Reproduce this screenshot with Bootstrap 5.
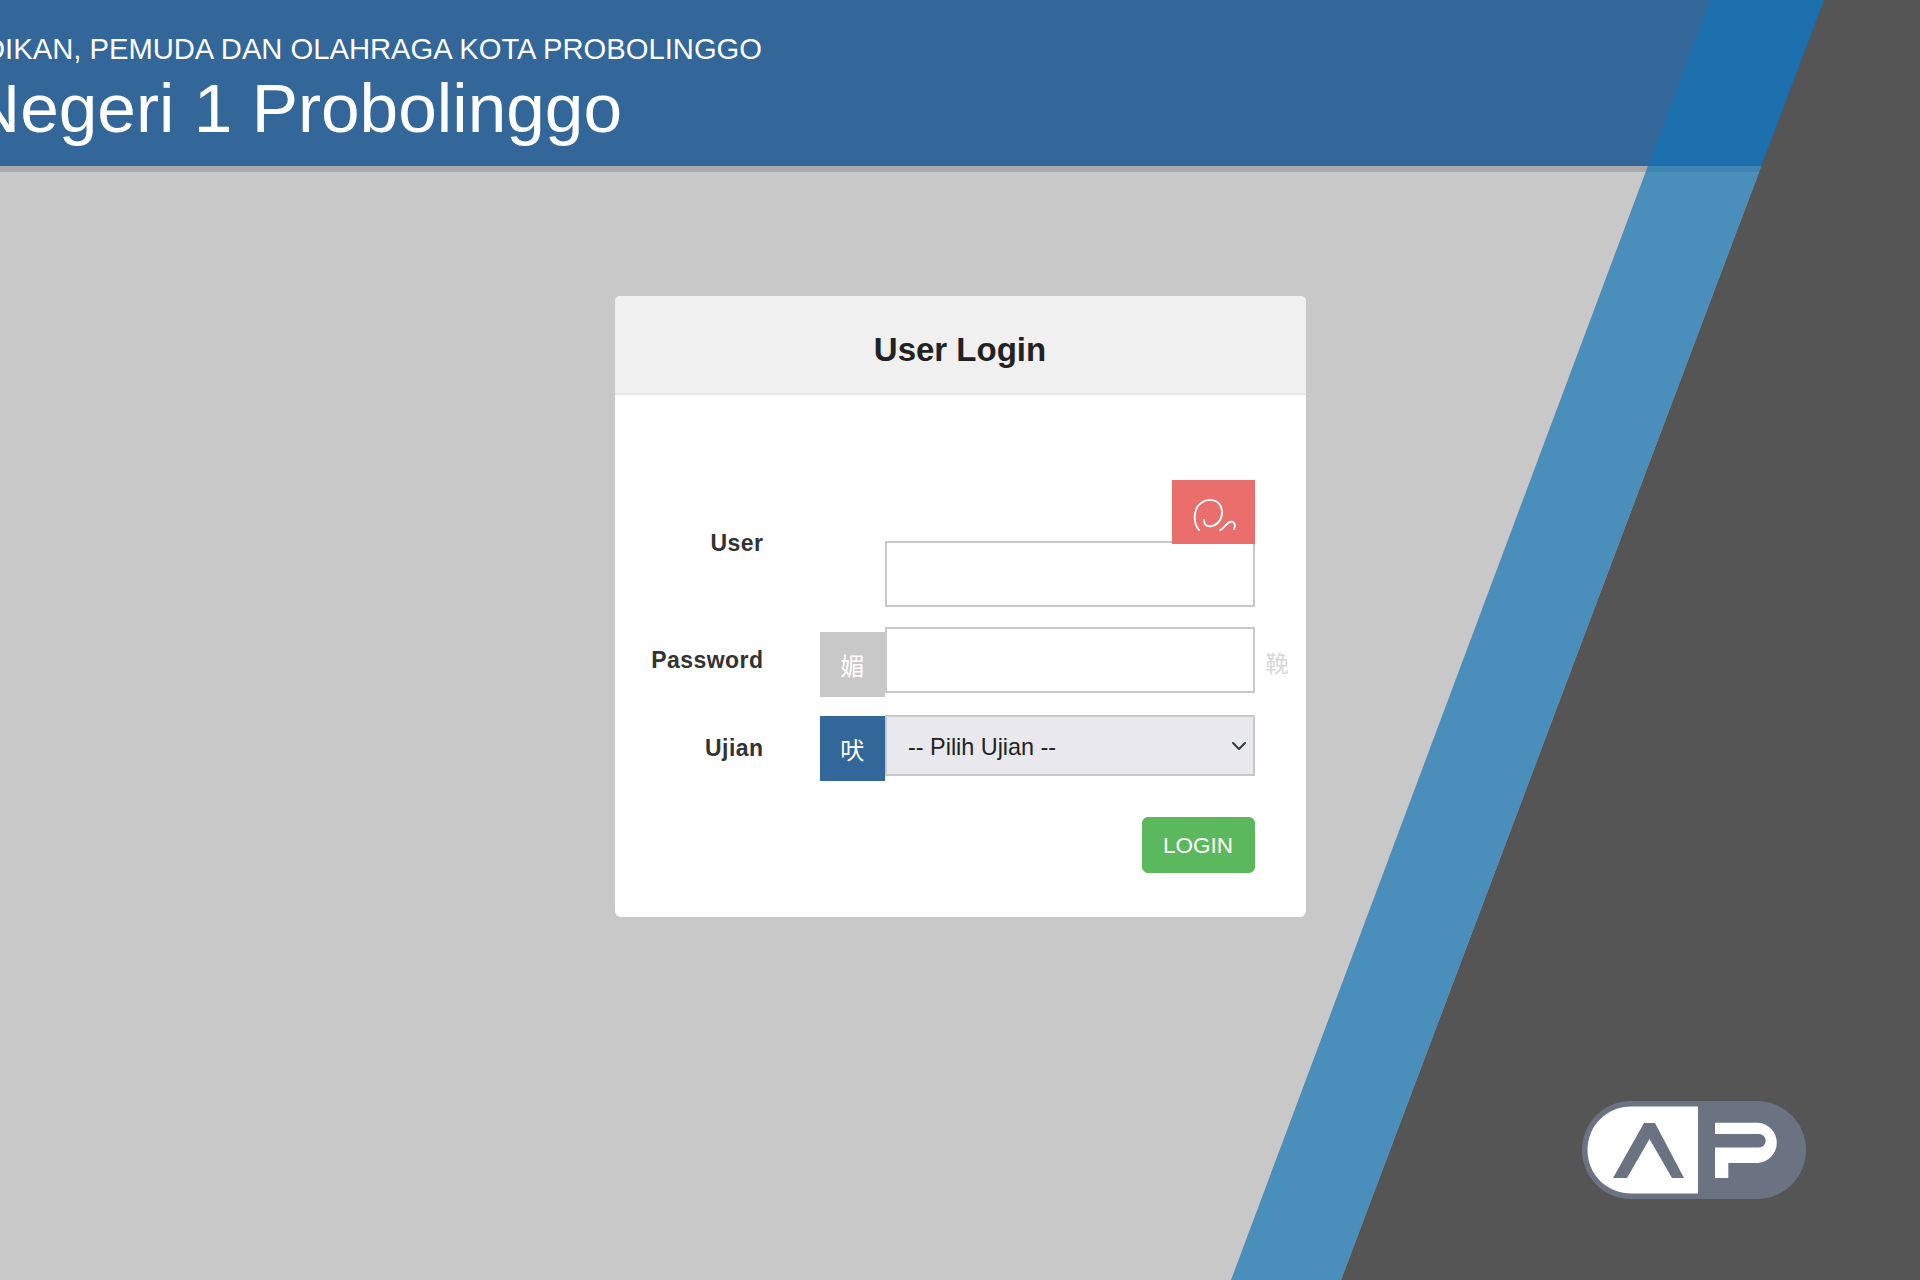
<!DOCTYPE html>
<html lang="id">
<head>
    <meta charset="UTF-8">
    <meta name="viewport" content="width=device-width, initial-scale=1.0">
    <title>User Login</title>
    <link rel="stylesheet" href="https://cdn.jsdelivr.net/npm/bootstrap@5.3.0/dist/css/bootstrap.min.css">
    <style>
        body { background: #c8c8c8; font-family: "Liberation Sans", Arial, sans-serif; color: #333; min-height: 1280px; overflow: hidden; }
        .top-bar { height: 172px; background: #336699; border-bottom: 6px solid #aaa; }
        .top-text { width: 762px; padding-top: 30px; }
        .top-sub { font-size: 29.2px; line-height: 38px; }
        .top-title { font-size: 69.4px; line-height: 80px; margin-right: 140px; }
        .bg-shapes { left: 0; top: 0; pointer-events: none; }
        .ap-logo { left: 1582px; top: 1101px; }
        .login-box { width: 691px; height: 621px; margin: 124px auto 0; border: 0; border-radius: 6px; }
        .login-box .card-header { height: 99px; padding-top: 19px; background: #f0f0f0; border-bottom: 2px solid #e6e6e6; font-size: 33px; font-weight: 700; color: #222; }
        .login-box .card-body { padding: 146px 0 42px; }
        .lbl-col { width: 149px; margin-right: 56px; font-size: 23px; font-weight: 700; letter-spacing: .45px; }
        .user-lbl { margin-top: -15px; }
        .add-box { width: 65.5px; height: 65px; background: #c8c8c8; color: #fff; font-size: 24px; font-family: "Noto Sans CJK SC", sans-serif; }
        .add-box.blue { background: #336699; }
        .fld-col { width: 369.5px; }
        .login-box .fld { height: 66px; border: 2px solid #c8c8c8; border-radius: 0; }
        .login-box .sel { height: 61px; border: 2px solid #c8c8c8; border-radius: 0; background-color: #e8e8ed; font-size: 23.4px; padding: 7px 36px 3px 21px; color: #222; background-position: right 4px center; background-size: 20px 16px; }
        .tail-col { width: 51px; padding-left: 11px; color: #d8d8d8; font-size: 23px; font-family: "Noto Sans CJK SC", sans-serif; }
        .red-tag { width: 83px; height: 64px; background: #e96e6c; top: -61px; right: 0; }
        .row-user { height: 66px; margin-bottom: 20px; }
        .row-pass { height: 70px; margin-bottom: 18px; }
        .row-ujian { height: 66px; margin-bottom: 36px; }
        .btn-go { width: 113px; height: 56px; background: #5cb85c; border-color: #5cb85c; font-size: 22.5px; margin-right: 51px; padding: 2px 0 0; }
    </style>
</head>
<body class="position-relative">

<div class="top-bar text-white">
    <div class="top-text d-flex flex-column align-items-end text-nowrap">
        <div class="top-sub">DINAS PENDIDIKAN, PEMUDA DAN OLAHRAGA KOTA PROBOLINGGO</div>
        <div class="top-title">SMK Negeri 1 Probolinggo</div>
    </div>
</div>

<div class="card login-box">
    <div class="card-header d-flex align-items-center justify-content-center">User Login</div>
    <div class="card-body">
        <form>
            <div class="d-flex row-user">
                <label class="lbl-col text-end user-lbl" for="user">User</label>
                <div style="width:65.5px"></div>
                <div class="fld-col position-relative">
                    <input type="text" id="user" class="form-control fld">
                    <div class="red-tag position-absolute d-flex align-items-center justify-content-center">
                        <svg class="mt-2 ms-1" width="46" height="38" viewBox="0 0 46 38" fill="none" stroke="#fff" stroke-width="1.9" stroke-linecap="round">
                            <path d="M7 33C1 26 1 12 9 6c7-5 17-4 20 4 3 8-1 17-9 19-5 1-8-1-8-6"/>
                            <path d="M28 33c3 0 6-7 10-8 4-1 6 2 4 7"/>
                        </svg>
                    </div>
                </div>
            </div>
            <div class="d-flex row-pass">
                <label class="lbl-col text-end d-flex align-items-center justify-content-end mb-1" for="pass">Password</label>
                <div class="add-box d-flex align-items-center justify-content-center align-self-end">媚</div>
                <div class="fld-col"><input type="password" id="pass" class="form-control fld"></div>
                <div class="tail-col d-flex align-items-center">鞔</div>
            </div>
            <div class="d-flex row-ujian">
                <label class="lbl-col text-end d-flex align-items-center justify-content-end" for="ujian">Ujian</label>
                <div class="add-box blue d-flex align-items-center justify-content-center align-self-end">吠</div>
                <div class="fld-col">
                    <select id="ujian" class="form-select sel">
                        <option>-- Pilih Ujian --</option>
                    </select>
                </div>
            </div>
            <div class="d-flex justify-content-end">
                <button type="button" class="btn btn-success btn-go">LOGIN</button>
            </div>
        </form>
    </div>
</div>

<!-- diagonal bands, they sit over the top bar -->
<svg class="bg-shapes position-absolute" width="1920" height="1280" viewBox="0 0 1920 1280">
    <polygon points="1710,0 1824,0 1341,1280 1231,1280" fill="rgb(15,115,182)" fill-opacity=".68"/>
    <polygon points="1824,0 1920,0 1920,1280 1341,1280" fill="#555"/>
</svg>

<svg class="ap-logo position-absolute" width="224" height="98" viewBox="0 0 224 98">
    <rect width="224" height="98" rx="49" fill="#6b7383"/>
    <path d="M116 5.5H50C25 5.5 5.5 24 5.5 49S25 92.500 50 92.500H116z" fill="#fff"/>
    <polygon points="62,22 73,22 102,77 90,77 67.500,38 45,77 31,77" fill="#6b7383"/>
    <path d="M133 21.700H176A20.200 20.200 0 0 1 176 62H146.300V77H133V46.500H177A6.700 6.700 0 0 0 177 33H133Z" fill="#fff"/>
</svg>

<script src="https://cdn.jsdelivr.net/npm/bootstrap@5.3.0/dist/js/bootstrap.bundle.min.js"></script>
</body>
</html>
